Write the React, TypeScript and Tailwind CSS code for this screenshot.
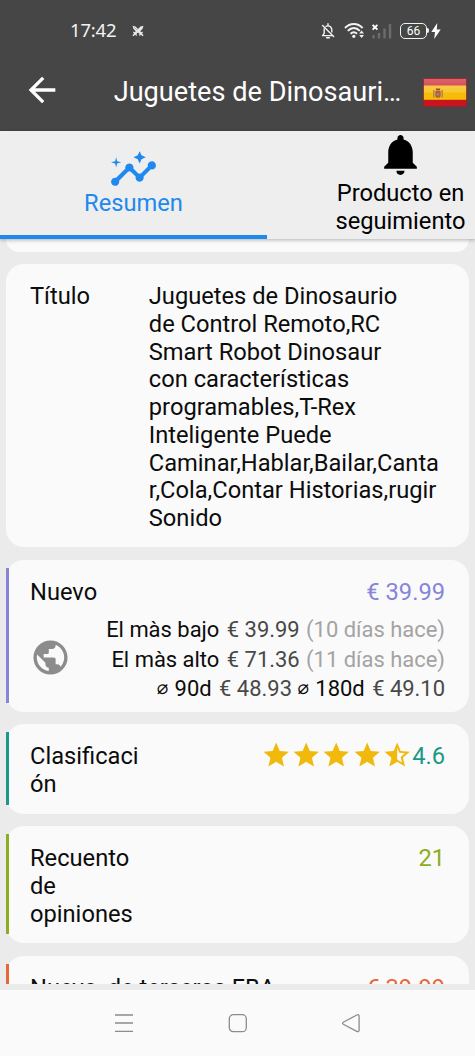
import type { ReactNode } from 'react';
import { MdArrowBack, MdInsights, MdNotifications, MdPublic, MdStar, MdStarHalf } from 'react-icons/md';

function SwordsIcon() {
  return (
    <svg className="h-[12px] w-[12px]" viewBox="0 0 12 12">
      <path d="M.6 .8 L3.6 1.4 L6 3.9 L8.4 1.4 L11.4 .8 L10.8 3.6 L8.3 6.2 L9.4 7.3 L10.6 6.4 L11 7.6 L10 8.6 L11.6 10.2 L10.6 11.3 L9 9.7 L7.8 10.8 L6.8 10.2 L7.6 9 L6 7.5 L4.4 9 L5.2 10.2 L4.2 10.8 L3 9.7 L1.4 11.3 L.4 10.2 L2 8.6 L1 7.6 L1.4 6.4 L2.6 7.3 L3.7 6.2 L1.2 3.6 Z" fill="#e6e6e6" />
      <path d="M2.2 2.2 L5.2 5.2" stroke="#777" strokeWidth=".5" />
    </svg>
  );
}

function MutedBellIcon() {
  return (
    <svg className="h-[16px] w-[14px]" viewBox="0 0 14 16" fill="none" stroke="#f2f2f2" strokeWidth="1.4">
      <path d="M4.5 3.6 C6.5 2.2 10.8 2.8 10.8 7 V9.6 M3.2 5.2 V10.4 L1.6 12.6 H11.4" strokeLinejoin="round" />
      <path d="M7 .8 V2.4 M5.6 14.8 H8.4 M1.6 2.4 L12.6 13.4" strokeLinecap="round" />
    </svg>
  );
}

function WifiIcon() {
  return (
    <svg className="h-[17px] w-[21px]" viewBox="0 0 21 17" fill="none" stroke="#f2f2f2" strokeWidth="2">
      <path d="M1 6 C6 .6 13.6 .6 18.6 6" />
      <path d="M3.8 8.9 C7.4 5.1 12.2 5.1 15.8 8.9" />
      <path d="M6.6 11.8 C8.6 9.7 11 9.7 13 11.8" />
      <circle cx="9.8" cy="14.3" r="1.6" fill="#f2f2f2" stroke="none" />
      <path d="M17.6 8.4 L20 11.4 H15.2 Z M17.6 16 L20 13 H15.2 Z" fill="#f2f2f2" stroke="none" />
    </svg>
  );
}

function SignalIcon() {
  return (
    <svg className="h-[16px] w-[21px]" viewBox="0 0 21 16" fill="none">
      <path d="M2.5 12 V15.5 M8 10 V15.5 M13.5 5.5 V15.5 M19 1 V15.5" stroke="#6c6c6c" strokeWidth="2.4" />
      <path d="M1.6 1.8 L6.4 6.6 M6.4 1.8 L1.6 6.6" stroke="#fff" strokeWidth="1.9" />
    </svg>
  );
}

function Battery() {
  return (
    <div className="flex items-center">
      <div className="flex h-[16px] w-[27px] items-center justify-center rounded-[5px] border-[1.5px] border-[#f2f2f2] text-[12px] leading-none text-white">
        66
      </div>
      <div className="h-[5px] w-[2px] rounded-r-sm bg-[#f2f2f2]" />
      <svg className="ml-[2px] h-[16px] w-[10px]" viewBox="0 0 10 16">
        <path d="M6.3 0 L.3 9 H4 L3.2 16 L9.7 6.4 H5.8 Z" fill="#fff" />
      </svg>
    </div>
  );
}

function SpainFlag() {
  return (
    <svg className="h-[29px] w-[44px] shrink-0" viewBox="0 0 44 29">
      <defs>
        <linearGradient id="gloss" x1="0" y1="0" x2="0" y2="1">
          <stop offset="0" stopColor="#fff" stopOpacity=".35" />
          <stop offset="1" stopColor="#fff" stopOpacity=".16" />
        </linearGradient>
      </defs>
      <rect x=".5" y=".5" width="43" height="28" rx="1" fill="#c8141e" />
      <rect x=".5" y="7.5" width="43" height="14.3" fill="#f5bc08" />
      <rect x=".5" y=".5" width="43" height="14" fill="url(#gloss)" />
      <rect x=".5" y=".5" width="43" height="28" rx="1" fill="none" stroke="#98202a" strokeOpacity=".7" />
      <path d="M10 12 H11.6 V19.5 H10 Z M18.4 12 H20 V19.5 H18.4 Z" fill="#b98a4c" />
      <path d="M12.3 13 H17.7 V17.5 Q17.7 19.8 15 19.8 Q12.3 19.8 12.3 17.5 Z" fill="#b3603a" />
      <path d="M12.7 10.4 H17.3 L16.8 12.6 H13.2 Z" fill="#a8482e" />
      <circle cx="15" cy="16.4" r="1.3" fill="#8a83a0" />
    </svg>
  );
}

function Card({ bar, className, children }: { bar?: string; className: string; children: ReactNode }) {
  return (
    <section className={`relative shrink-0 rounded-[18px] bg-[#fafafa] pr-[24px] pl-[24px] pt-[19px] ${className}`}>
      {bar && <div className={`absolute top-[8px] bottom-[9px] left-0 w-[3px] ${bar}`} />}
      {children}
    </section>
  );
}

function Diameter() {
  return <span className="mr-[1px] inline-block align-[2px] font-['DejaVu_Sans',sans-serif] text-[19px] leading-none">⌀</span>;
}

export default function App() {
  return (
    <div className="flex h-[1056px] w-[475px] flex-col overflow-hidden bg-[#ebebeb] font-['Roboto',sans-serif] text-[23.68px] leading-[27.75px] text-[#0c0c0c]">
      <header className="h-[131.4px] shrink-0 bg-[#464646] text-white">
        <div className="flex h-[61px] items-center pr-[34px] pl-[70px]">
          <span className="font-['Noto_Sans',sans-serif] text-[18.5px] leading-none tracking-[-0.2px] text-[#f2f2f2]">17:42</span>
          <div className="ml-[16px]">
            <SwordsIcon />
          </div>
          <div className="ml-auto flex items-center">
            <MutedBellIcon />
            <div className="ml-[9px]"><WifiIcon /></div>
            <div className="ml-[6px]"><SignalIcon /></div>
            <div className="ml-[8px]"><Battery /></div>
          </div>
        </div>
        <div className="flex h-[61px] items-center pr-[8px] pl-[21.5px]">
          <MdArrowBack className="-mt-[3px] h-[40px] w-[40px]" />
          <h1 className="ml-[52.2px] whitespace-nowrap text-[27.15px] leading-[32px]">Juguetes de Dinosauri…</h1>
          <div className="ml-auto pt-[1px]"><SpainFlag /></div>
        </div>
      </header>

      <nav className="relative z-10 flex h-[107.6px] shrink-0 bg-[#eee] shadow-[0_1px_4px_rgba(0,0,0,0.3)]">
        <div className="flex w-[267px] shrink-0 flex-col items-center justify-center border-b-[4.5px] border-[#2089ee] text-[#2089ee]">
          <MdInsights className="-mt-[3px] h-[49px] w-[49px] shrink-0" />
          <span className="-mt-[4px]">Resumen</span>
        </div>
        <div className="flex w-[267px] shrink-0 flex-col items-center justify-center pb-[4.5px] text-center text-black">
          <MdNotifications className="h-[49px] w-[49px] shrink-0" />
          <span className="w-[150px] pt-[1px]">Producto en seguimiento</span>
        </div>
      </nav>

      <main className="flex h-[745.3px] shrink-0 flex-col gap-[12.5px] overflow-hidden px-[6px]">
        <div className="h-[12.6px] shrink-0 rounded-b-[18px] bg-[#fafafa]" />
        <Card className="flex h-[283px]">
          <div className="w-[118.8px] shrink-0">Título</div>
          <div className="whitespace-nowrap">
            Juguetes de Dinosaurio<br />
            de Control Remoto,RC<br />
            Smart Robot Dinosaur<br />
            con características<br />
            programables,T-Rex<br />
            Inteligente Puede<br />
            Caminar,Hablar,Bailar,Canta<br />
            r,Cola,Contar Historias,rugir<br />
            Sonido
          </div>
        </Card>

        <Card bar="bg-[#8884d8]" className="h-[152px]">
          <div className="flex justify-between">
            <span>Nuevo</span>
            <span className="text-[#8884d8]">€ 39.99</span>
          </div>
          <div className="mt-[9px] flex items-center justify-between">
            <MdPublic className="-mt-[5px] h-[41px] w-[41px] shrink-0 text-[#8c8c8c]" />
            <div className="whitespace-nowrap text-right text-[21.95px] leading-[29.7px]">
              <div>El màs bajo <span className="ml-[2px] text-[#484848]">€ 39.99</span> <span className="ml-[1px] text-[#a3a3a3]">(10 días hace)</span></div>
              <div>El màs alto <span className="ml-[2px] text-[#484848]">€ 71.36</span> <span className="ml-[1px] text-[#a3a3a3]">(11 días hace)</span></div>
              <div className="-mt-[0.5px]">
                <Diameter /> 90d <span className="ml-[2px] text-[#484848]">€ 48.93</span> <Diameter /> 180d <span className="ml-[2px] text-[#484848]">€ 49.10</span>
              </div>
            </div>
          </div>
        </Card>

        <Card bar="bg-[#1a9988]" className="flex h-[89.5px] justify-between">
          <div>Clasificaci<br />ón</div>
          <div className="flex h-[28px] items-center text-[#1a9988]">
            <div className="-mt-[4px] flex text-[#f1b90c]">
              {[0, 1, 2, 3].map((star) => (
                <MdStar key={star} className="h-[30.4px] w-[30.4px]" />
              ))}
              <MdStarHalf className="h-[30.4px] w-[30.4px]" />
            </div>
            <span className="-ml-[0.5px]">4.6</span>
          </div>
        </Card>

        <Card bar="bg-[#8bad1e]" className="flex h-[117px] justify-between">
          <div>Recuento<br />de<br />opiniones</div>
          <span className="text-[#8bad1e]">21</span>
        </Card>

        <Card bar="bg-[#e8663c]" className="flex h-[90px] justify-between">
          <span className="whitespace-pre">Nuevo, de terceros FBA</span>
          <span className="text-[#e8663c]">€ 39.99</span>
        </Card>
      </main>

      <div className="h-[6px] shrink-0" />
      <footer className="flex grow items-center bg-[#fafafa]">
        <svg className="ml-[114px] h-[20px] w-[20px]" viewBox="0 0 20 20" stroke="#8c8c8c" strokeWidth="1.3">
          <path d="M1 2 H19 M1 10 H19 M1 18.3 H19" />
        </svg>
        <svg className="ml-[94px] h-[20px] w-[20px]" viewBox="0 0 20 20" fill="none" stroke="#8c8c8c" strokeWidth="1.3">
          <rect x="1.3" y="1.7" width="17" height="17" rx="4" />
        </svg>
        <svg className="ml-[94px] h-[20px] w-[20px]" viewBox="0 0 20 20" fill="none" stroke="#8c8c8c" strokeWidth="1.3">
          <path d="M1.3 9.2 Q-.2 10.2 1.3 11.2 L14.8 18.4 Q17.1 19.4 17.1 17 V3.4 Q17.1 1 14.8 2 Z" />
        </svg>
      </footer>
    </div>
  );
}
